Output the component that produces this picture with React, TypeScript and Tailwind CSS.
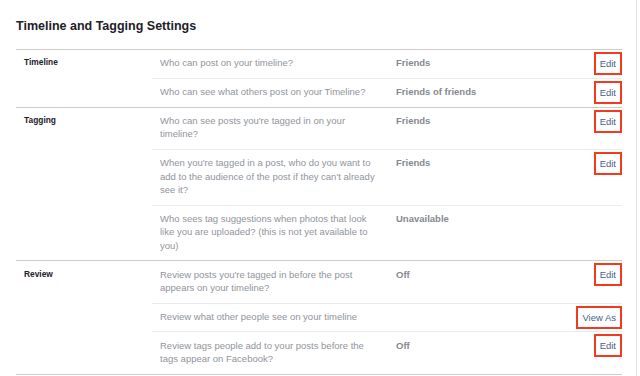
const sections = [
  {
    label: "Timeline",
    rows: [
      { q: "Who can post on your timeline?", v: "Friends", action: "Edit" },
      { q: "Who can see what others post on your Timeline?", v: "Friends of friends", action: "Edit" },
    ],
  },
  {
    label: "Tagging",
    rows: [
      { q: "Who can see posts you're tagged in on your timeline?", v: "Friends", action: "Edit" },
      {
        q: "When you're tagged in a post, who do you want to add to the audience of the post if they can't already see it?",
        v: "Friends",
        action: "Edit",
      },
      {
        q: "Who sees tag suggestions when photos that look like you are uploaded? (this is not yet available to you)",
        v: "Unavailable",
        action: "",
      },
    ],
  },
  {
    label: "Review",
    rows: [
      { q: "Review posts you're tagged in before the post appears on your timeline?", v: "Off", action: "Edit" },
      { q: "Review what other people see on your timeline", v: "", action: "View As" },
      { q: "Review tags people add to your posts before the tags appear on Facebook?", v: "Off", action: "Edit" },
    ],
  },
];

export default function App() {
  return (
    <div className="w-[640px] h-[376px] bg-white overflow-hidden font-['Liberation_Sans',Arial,sans-serif]">
      <div className="w-[637px] h-[376px] border-r border-[#dddfe2]">
        <h1 className="pt-[18px] mb-[15px] px-4 text-[12.5px] leading-[16px] font-bold text-[#1d2129]">
          Timeline and Tagging Settings
        </h1>

        <div className="mx-4 w-[606px] border-b border-[#cccccc]">
          {sections.map((section) => (
            <div key={section.label} className="flex border-t border-[#cccccc]">
              <div className="w-[136px] px-2 pt-[6.2px] text-[8.4px] leading-[13.5px] font-bold text-[#1d2129]">
                {section.label}
              </div>
              <div className="flex-1">
                {section.rows.map((row, i) => (
                  <div
                    key={row.q}
                    className={`flex ${i > 0 ? "border-t border-[#e9ebee]" : ""}`}
                  >
                    <div className="w-[236px] px-2 pt-[6.2px] pb-[8.1px] text-[9.5px] leading-[13.5px] text-[#90949c]">
                      {row.q}
                    </div>
                    <div className="flex-1 px-2 pt-[6.2px] text-[9.5px] leading-[13.5px] font-bold text-[#85898f]">
                      {row.v}
                    </div>
                    <div className="pt-[2px]">
                      {row.action && (
                        <span className="block border-2 border-[#f23a1d] px-[4px] text-[9.5px] leading-[19px] text-[#4b5f8a]">
                          {row.action}
                        </span>
                      )}
                    </div>
                  </div>
                ))}
              </div>
            </div>
          ))}
        </div>
      </div>
    </div>
  );
}
